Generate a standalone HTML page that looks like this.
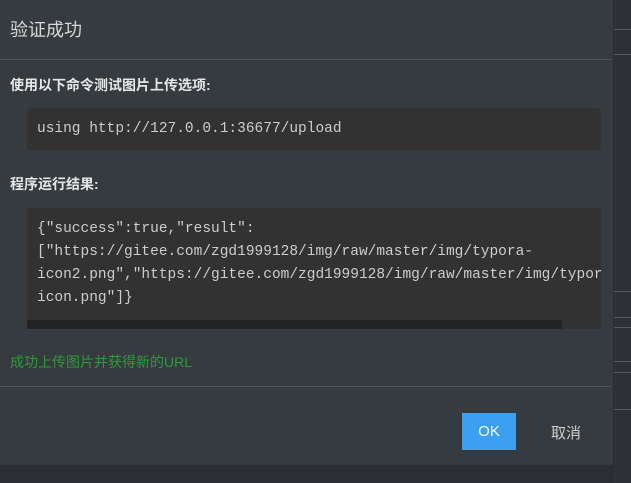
<!DOCTYPE html>
<html><head><meta charset="utf-8"><style>
body{margin:0;width:631px;height:483px;background:#2b2e32;position:relative;overflow:hidden;font-family:"Liberation Sans","Noto Sans CJK SC",sans-serif}
.side{position:absolute;left:614px;top:0;width:17px;height:483px;background:#2e3236}
.sl{position:absolute;left:614px;width:17px;height:1px;background:#555a5f}
.dlg{position:absolute;left:0;top:0;width:613px;height:465px;background:#363b40;border-radius:0 0 3px 0}
.t{position:absolute;left:10px;top:16px;font-size:18px;color:#d8d8d8}
.hr{position:absolute;left:0;width:611px;height:1px;background:#50555a}
.lb{position:absolute;left:10px;font-size:14px;font-weight:bold;color:#e6e6e6}
.code{position:absolute;left:27px;width:574px;box-sizing:border-box;background:#323232;border-radius:4px;overflow:hidden;font-family:"Liberation Mono",monospace;font-size:14.5px;color:#cccccc;white-space:pre;padding-left:10px}
.ok{position:absolute;left:462px;top:413px;width:54px;height:37px;background:#3c9ff0;color:#fff;font-size:15px;text-align:center;line-height:37px}
</style></head><body>
<div class="side"></div>
<div class="sl" style="top:29px"></div><div class="sl" style="top:54px"></div>
<div class="sl" style="top:291px"></div><div class="sl" style="top:317px"></div>
<div class="sl" style="top:327px"></div><div class="sl" style="top:361px"></div>
<div class="sl" style="top:372px"></div><div class="sl" style="top:409px"></div>
<div class="dlg">
<div class="t">验证成功</div>
<div class="hr" style="top:59px"></div>
<div class="lb" style="top:75px">使用以下命令测试图片上传选项:</div>
<div class="code" style="top:108px;height:42px;line-height:42px">using http://127.0.0.1:36677/upload</div>
<div class="lb" style="top:174px">程序运行结果:</div>
<div class="code" style="top:208px;height:121px;padding-top:10px;line-height:23px">{"success":true,"result":
["https://gitee.com/zgd1999128/img/raw/master/img/typora-
icon2.png","https://gitee.com/zgd1999128/img/raw/master/img/typora-
icon.png"]}</div>
<div style="position:absolute;left:27px;top:320px;width:535px;height:9px;background:#242424"></div>
<div style="position:absolute;left:10px;top:352px;font-size:14px;color:#2e9a3c">成功上传图片并获得新的URL</div>
<div class="hr" style="top:386px"></div>
<div class="ok">OK</div>
<div style="position:absolute;left:551px;top:422px;font-size:15px;color:#cfcfcf">取消</div>
</div>
</body></html>
